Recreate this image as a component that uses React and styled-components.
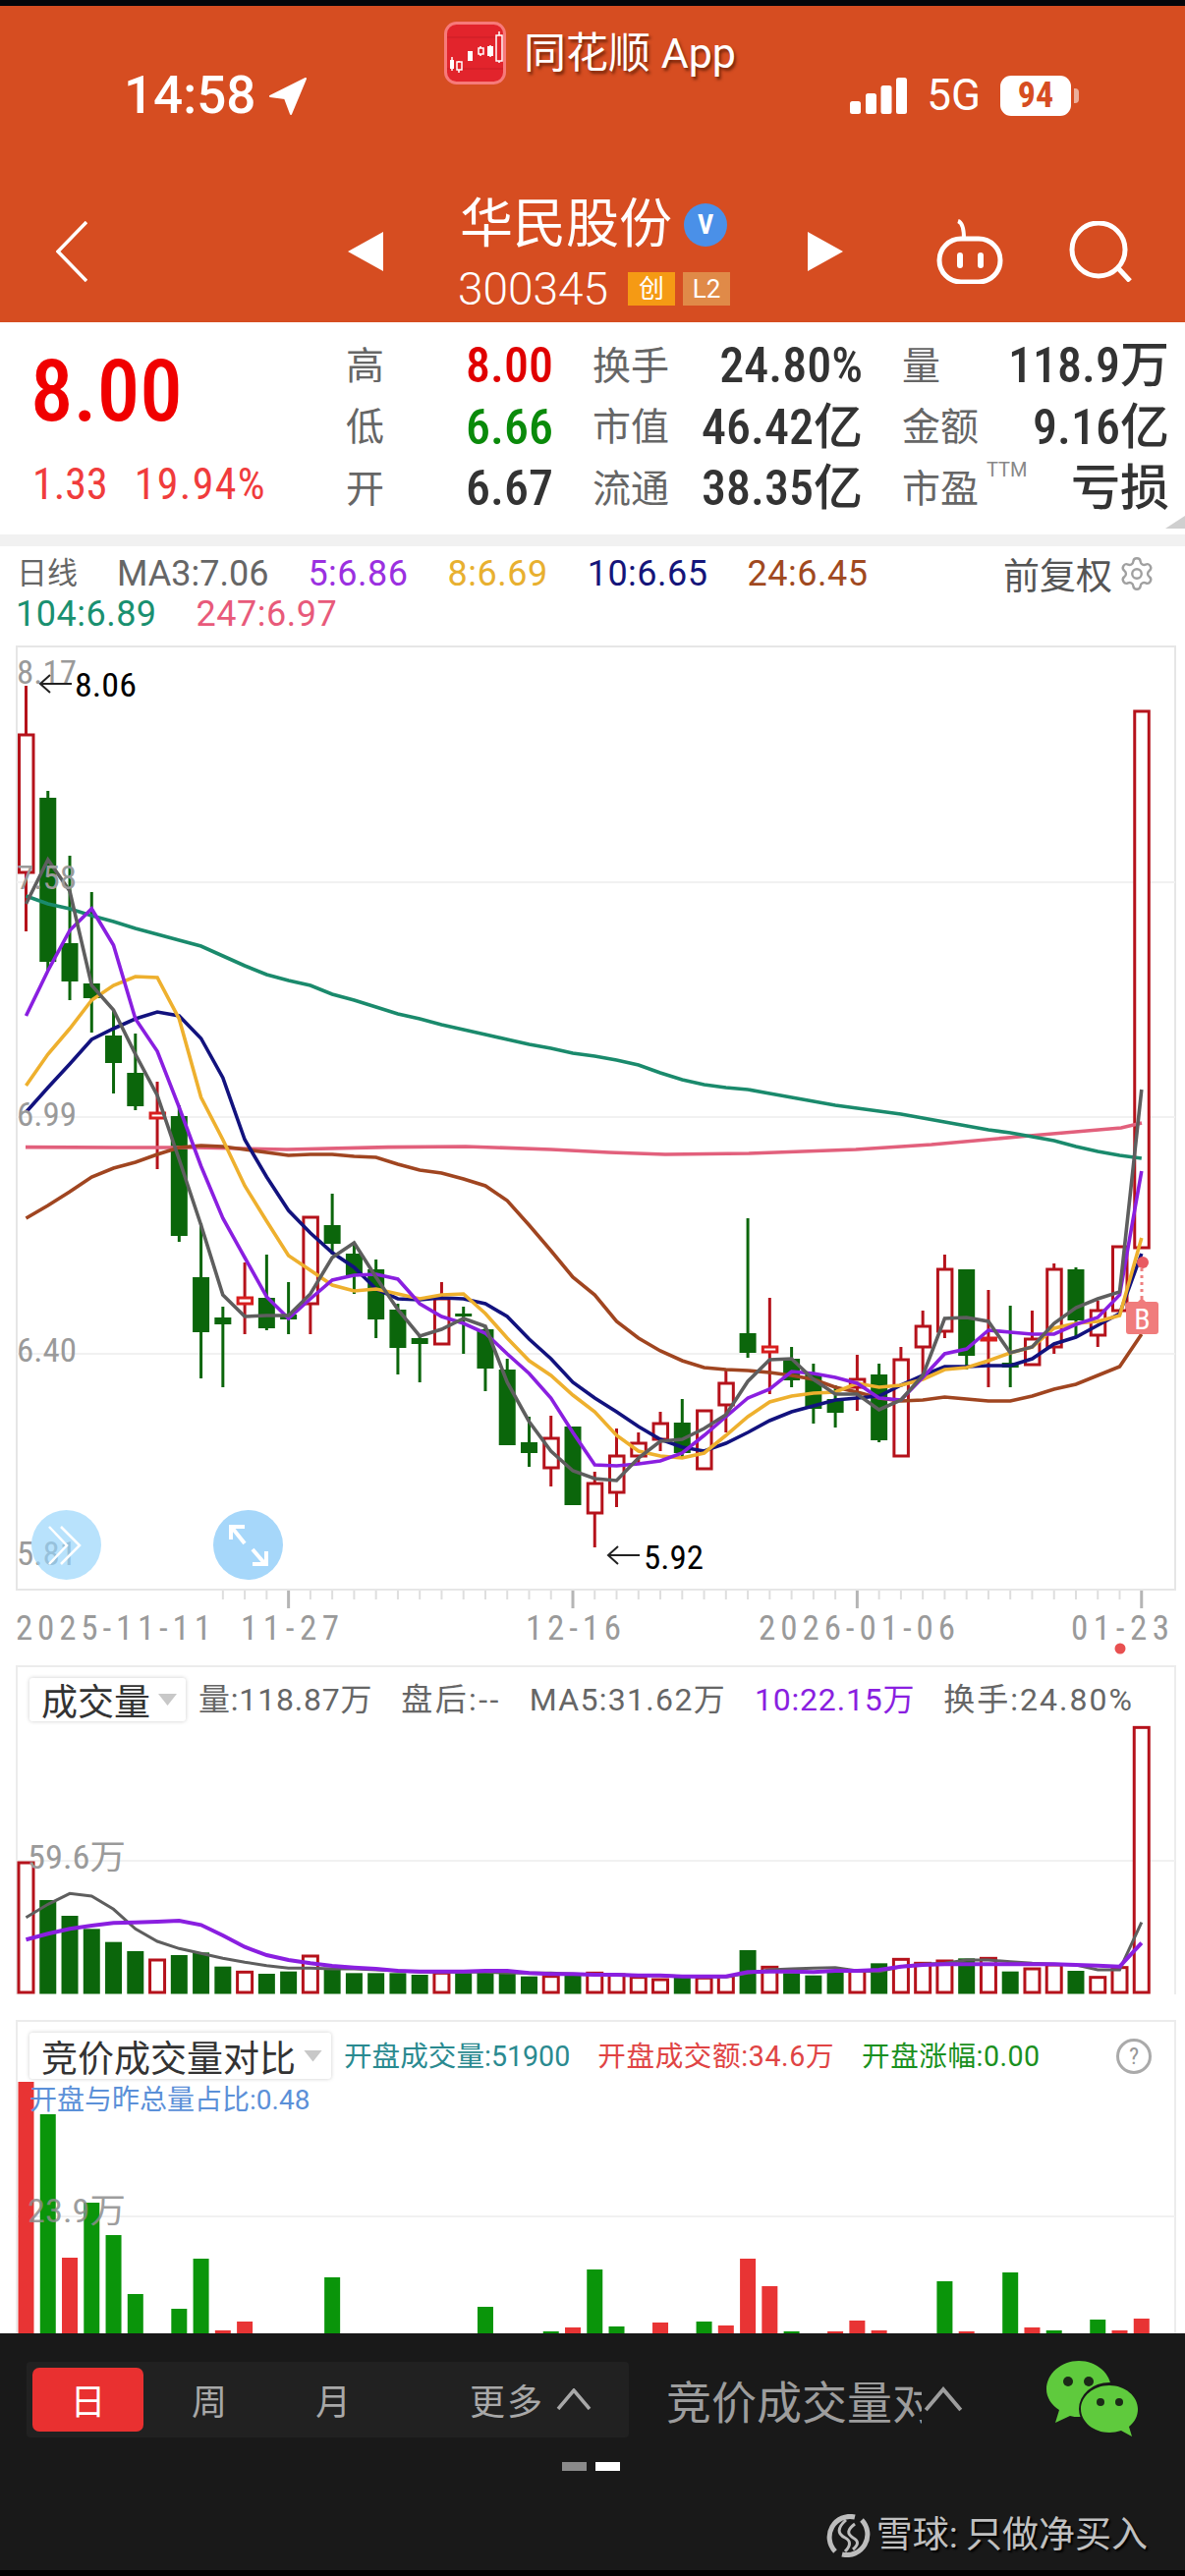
import React from "react";
import styled, { createGlobalStyle } from "styled-components";
import { Settings } from "lucide-react";

const ORANGE = "#d64d21";
const UP = "#b5121b";
const DOWN = "#0b660b";

const Global = createGlobalStyle`
  html, body { margin: 0; padding: 0; background: #fff; }
  body { font-family: Roboto, "Noto Sans CJK SC", sans-serif; font-stretch: 85%; }
  * { box-sizing: border-box; }
`;

const Page = styled.div`
  width: 1206px;
  height: 2622px;
  overflow: hidden;
  display: flex;
  flex-direction: column;
  background: #fff;
  border-top: 6px solid #05060a;
  border-bottom: 6px solid #000;
`;

/* ---------- header ---------- */
const Header = styled.header`
  position: relative;
  height: 322px;
  flex: none;
  background: ${ORANGE};
  color: #fff;
  padding-top: 71px;
`;
const AppBanner = styled.div`
  position: absolute;
  top: 16px;
  left: 452px;
  display: flex;
  align-items: center;
  gap: 18px;
  font-size: 43px;
  font-stretch: 100%;
  line-height: 64px;
  text-shadow: 2px 3px 3px rgba(70, 20, 0, 0.65);
`;
const StatusBar = styled.div`
  display: flex;
  align-items: center;
  height: 41px;
  padding: 0 116px 0 126px;
`;
const Clock = styled.span`
  font-size: 53px;
  font-stretch: 100%;
  font-weight: 500;
  line-height: 41px;
  width: 147px;
`;
const StatusRight = styled.div`
  margin-left: auto;
  display: flex;
  align-items: center;
  gap: 20px;
`;
const Net = styled.span`
  font-size: 44px;
  font-stretch: 100%;
  line-height: 41px;
`;
const Battery = styled.span`
  position: relative;
  display: block;
  width: 72px;
  height: 41px;
  border-radius: 11px;
  background: #fff;
  color: ${ORANGE};
  font-size: 36px;
  font-weight: 700;
  line-height: 41px;
  text-align: center;
  &::after {
    content: "";
    position: absolute;
    right: -8px;
    top: 13px;
    width: 5px;
    height: 15px;
    border-radius: 0 4px 4px 0;
    background: rgba(255, 255, 255, 0.55);
  }
`;
const NavBar = styled.nav`
  display: flex;
  align-items: center;
  height: 112px;
  margin-top: 82px;
  padding-left: 57px;
`;
const Triangle = styled.span`
  display: block;
  flex: none;
  width: 36px;
  height: 40px;
  margin-left: ${(p) => p.$ml}px;
  background: #fff;
  clip-path: ${(p) =>
    p.$dir === "left"
      ? "polygon(100% 0, 0 50%, 100% 100%)"
      : "polygon(0 0, 100% 50%, 0 100%)"};
`;
const TitleBox = styled.div`
  width: 356px;
  margin-left: 76px;
  display: flex;
  flex-direction: column;
`;
const NameRow = styled.div`
  display: flex;
  align-items: center;
  gap: 12px;
  height: 58px;
  margin-left: 2px;
  font-size: 54px;
  line-height: 58px;
`;
const VBadge = styled.span`
  display: flex;
  align-items: center;
  justify-content: center;
  width: 44px;
  height: 44px;
  border-radius: 50%;
  background: #4a90e8;
  font-size: 28px;
  font-weight: 700;
`;
const CodeRow = styled.div`
  display: flex;
  align-items: center;
  height: 38px;
  margin-top: 17px;
  font-size: 46px;
  font-stretch: 100%;
  line-height: 38px;
  font-weight: 300;
`;
const Tag = styled.span`
  display: flex;
  align-items: center;
  justify-content: center;
  width: 48px;
  height: 34px;
  margin-left: ${(p) => p.$ml}px;
  background: ${(p) => p.$bg};
  font-size: 26px;
  font-weight: 400;
`;
const NavIcon = styled.svg`
  display: block;
  flex: none;
  margin-left: ${(p) => p.$ml || 0}px;
`;

/* ---------- quote panel ---------- */
const Quote = styled.section`
  position: relative;
  flex: none;
  height: 216px;
  display: flex;
  padding-right: 13px;
`;
const PriceCol = styled.div`
  width: 352px;
  flex: none;
  padding: 28px 0 0 31px;
`;
const Price = styled.div`
  font-size: 87px;
  font-stretch: 78%;
  line-height: 85px;
  font-weight: 500;
  color: #f00000;
`;
const Change = styled.div`
  display: flex;
  gap: 27px;
  margin-top: 30px;
  margin-left: 2px;
  font-size: 44px;
  line-height: 44px;
  color: #f03c3c;
  span + span {
    letter-spacing: 1.3px;
  }
`;
const QuoteGrid = styled.div`
  flex: 1;
  display: grid;
  grid-template-columns: 211px 275px 272px;
  column-gap: 40px;
  grid-auto-rows: 62.5px;
  padding-top: 13px;
`;
const Cell = styled.div`
  display: flex;
  align-items: center;
`;
const Label = styled.span`
  font-size: 39px;
  color: #666;
  line-height: 1;
  margin-top: 2px;
`;
const Ttm = styled.span`
  align-self: flex-start;
  margin: 2px 0 0 8px;
  font-size: 20px;
  font-stretch: 100%;
  line-height: 20px;
  color: #888;
`;
const Value = styled.span`
  margin-left: auto;
  font-size: 50px;
  font-weight: 500;
  line-height: 1;
  color: ${(p) => p.$color || "#333"};
`;
const Corner = styled.span`
  position: absolute;
  right: 0;
  bottom: 6px;
  width: 20px;
  height: 13px;
  background: #cfcfcf;
  clip-path: polygon(100% 0, 100% 100%, 0 100%);
`;
const Band = styled.div`
  flex: none;
  height: 12px;
  background: #f1f1f1;
`;

/* ---------- MA legend ---------- */
const Legend = styled.section`
  flex: none;
  height: 100px;
  padding: 9px 0 0 17px;
`;
const LegendRow = styled.div`
  display: flex;
  align-items: center;
  gap: 40px;
  height: 38px;
  margin-left: ${(p) => p.$ml || 0}px;
  margin-top: ${(p) => p.$mt || 0}px;
`;
const Ma = styled.span`
  font-size: ${(p) => p.$size || 36}px;
  font-stretch: 100%;
  letter-spacing: ${(p) => p.$ls ?? 0.5}px;
  line-height: 38px;
  color: ${(p) => p.$color};
`;
const AdjustBox = styled.span`
  margin-left: auto;
  display: flex;
  align-items: center;
  gap: 6px;
  padding-right: 30px;
  font-size: 37px;
  color: #555;
`;

/* ---------- chart panels ---------- */
const KlineWrap = styled.section`
  position: relative;
  flex: none;
  height: 1039px;
`;
const ChartSvg = styled.svg`
  position: absolute;
  left: 0;
  top: 0;
  display: block;
`;
const AxisText = styled.text`
  font-family: Roboto, "Noto Sans CJK SC", sans-serif;
  font-stretch: 85%;
  font-size: ${(p) => p.$size || 35}px;
  font-weight: ${(p) => p.$weight || 400};
  fill: ${(p) => p.$fill || "#9a9a9a"};
`;
const FloatBtn = styled.button`
  position: absolute;
  left: ${(p) => p.$left}px;
  top: 881px;
  width: 71px;
  height: 71px;
  border: 0;
  padding: 0;
  border-radius: 50%;
  background: ${(p) => p.$bg};
  display: flex;
  align-items: center;
  justify-content: center;
`;
const SubPanel = styled.section`
  position: relative;
  flex: none;
  height: ${(p) => p.$h}px;
  overflow: hidden;
`;
const SubHead = styled.div`
  position: relative;
  display: flex;
  align-items: center;
  padding: ${(p) => p.$pt}px 0 0 30px;
`;
const Selector = styled.div`
  display: flex;
  align-items: center;
  flex: none;
  height: ${(p) => p.$h}px;
  padding: 0 9px 0 12px;
  background: #fff;
  box-shadow: 0 0 4px rgba(0, 0, 0, 0.2);
  border-radius: 3px;
  font-size: 37px;
  color: #333;
  gap: 8px;
  &::after {
    content: "";
    width: 19px;
    height: 12px;
    background: #c8c8c8;
    clip-path: polygon(0 0, 100% 0, 50% 100%);
  }
`;
const Stats = styled.div`
  display: flex;
  align-items: center;
  gap: ${(p) => p.$gap}px;
  margin-left: ${(p) => p.$ml}px;
`;
const Stat = styled.span`
  font-size: ${(p) => p.$size}px;
  font-stretch: 100%;
  letter-spacing: ${(p) => p.$ls || 0}px;
  line-height: 40px;
  color: ${(p) => p.$color || "#666"};
  white-space: nowrap;
`;
const Help = styled.span`
  position: absolute;
  left: 1136px;
  top: 19px;
  width: 36px;
  height: 36px;
  border: 3px solid #aaa;
  border-radius: 50%;
  font-size: 24px;
  line-height: 30px;
  text-align: center;
  color: #999;
`;
const RatioLine = styled.div`
  position: relative;
  margin: 5px 0 0 30px;
  font-size: 28px;
  font-stretch: 100%;
  line-height: 34px;
  color: #5b90d8;
`;

/* ---------- bottom bar ---------- */
const BottomBar = styled.footer`
  flex: 1;
  display: flex;
  flex-direction: column;
  background: #191919;
  color: #a8a8a8;
  position: relative;
  padding-top: 28px;
`;
const ToolRow = styled.div`
  display: flex;
  align-items: center;
  padding: 0 48px 0 27px;
`;
const Periods = styled.div`
  display: flex;
  align-items: center;
  width: 613px;
  height: 77px;
  padding-left: 6px;
  background: #212121;
  border-radius: 4px;
`;
const Period = styled.span`
  display: flex;
  align-items: center;
  justify-content: center;
  height: 65px;
  width: ${(p) => (p.$active ? 113 : 126)}px;
  margin-right: ${(p) => (p.$active ? 4 : 0)}px;
  background: ${(p) => (p.$active ? "#e93030" : "transparent")};
  color: ${(p) => (p.$active ? "#fff" : "#a8a8a8")};
  border-radius: 7px;
  font-size: 36px;
`;
const More = styled.span`
  margin-left: auto;
  padding-right: 38px;
  display: flex;
  align-items: center;
  gap: 12px;
  font-size: 36px;
  letter-spacing: 2px;
`;
const IndicatorPick = styled.div`
  display: flex;
  align-items: center;
  margin-left: 38px;
  font-size: 46px;
  color: #9d9d9d;
`;
const IndicatorName = styled.span`
  width: 260px;
  white-space: nowrap;
`;
const ChevronCover = styled.span`
  position: relative;
  display: flex;
  align-items: center;
  background: #191919;
  padding: 0 2px;
  height: 50px;
`;
const Spacer = styled.span`
  flex: 1;
`;
const PageDots = styled.div`
  display: flex;
  justify-content: center;
  gap: 9px;
  margin-top: 25px;
  padding-right: 3px;
`;
const PageDot = styled.span`
  width: 25px;
  height: 9px;
  background: ${(p) => (p.$on ? "#fff" : "#8a8a8a")};
`;
const Watermark = styled.div`
  display: flex;
  align-items: center;
  justify-content: flex-end;
  gap: 5px;
  margin-top: 44px;
  padding-right: 38px;
  font-size: 37px;
  line-height: 44px;
  color: #c0c0c0;
  text-shadow: 2px 2px 2px #000;
`;

/* ---------- data (page pixel coordinates) ---------- */
const X = (i) => 26.5 + 22.26 * i;
const upSet = new Set([0, 6, 10, 13, 19, 24, 26, 27, 28, 29, 31, 32, 34, 38, 40, 41, 42, 44, 46, 47, 49, 50, 51]);

const candles = [
  [698, 748, 888, 948], [805, 812, 979, 988], [871, 960, 999, 1018], [908, 1001, 1016, 1051],
  [1028, 1054, 1082, 1113], [1052, 1092, 1126, 1130], [1101, 1133, 1138, 1190], [1125, 1136, 1258, 1264],
  [1245, 1300, 1356, 1403], [1330, 1341, 1348, 1412], [1285, 1321, 1327, 1358], [1277, 1321, 1352, 1354],
  [1305, 1338, 1343, 1358], [1239, 1239, 1327, 1358], [1215, 1247, 1266, 1277], [1265, 1276, 1298, 1317],
  [1282, 1292, 1343, 1362], [1327, 1333, 1372, 1399], [1360, 1362, 1368, 1407], [1305, 1322, 1368, 1368],
  [1330, 1337, 1340, 1378], [1350, 1353, 1393, 1416], [1383, 1394, 1471, 1471], [1442, 1468, 1479, 1493],
  [1441, 1464, 1494, 1513], [1452, 1452, 1532, 1532], [1498, 1510, 1540, 1575], [1454, 1482, 1519, 1534],
  [1458, 1469, 1482, 1490], [1437, 1449, 1465, 1477], [1424, 1448, 1479, 1484], [1436, 1436, 1495, 1495],
  [1394, 1408, 1430, 1458], [1240, 1357, 1377, 1382], [1321, 1371, 1376, 1419], [1371, 1383, 1405, 1412],
  [1388, 1398, 1434, 1449], [1410, 1424, 1438, 1453], [1379, 1404, 1412, 1436], [1388, 1399, 1466, 1468],
  [1371, 1384, 1482, 1482], [1334, 1350, 1371, 1402], [1277, 1292, 1355, 1362], [1292, 1292, 1380, 1394],
  [1313, 1362, 1364, 1412], [1329, 1387, 1392, 1412], [1334, 1363, 1389, 1389], [1286, 1292, 1371, 1378],
  [1290, 1292, 1344, 1360], [1324, 1334, 1359, 1371], [1269, 1269, 1334, 1334], [724, 724, 1270, 1270],
];

const ma3 = [920,875,907,1003,1028,1073,1115,1180,1247,1318,1340,1339,1339,1317,1280,1265,1300,1333,1360,1353,1342,1350,1407,1447,1477,1497,1505,1507,1484,1467,1465,1454,1440,1406,1384,1383,1404,1419,1419,1435,1425,1400,1342,1341,1345,1377,1371,1347,1331,1322,1315,1109];
const ma5 = [1034,988,947,925,962,1037,1070,1127,1187,1240,1280,1320,1342,1322,1303,1298,1297,1302,1327,1340,1347,1357,1378,1398,1423,1458,1491,1492,1490,1487,1479,1461,1442,1423,1414,1396,1398,1402,1408,1423,1425,1402,1378,1373,1354,1356,1358,1358,1348,1341,1318,1192];
const ma8 = [1105,1073,1047,1018,1003,994,995,1037,1117,1160,1207,1243,1278,1293,1308,1314,1312,1317,1322,1318,1317,1337,1362,1385,1400,1420,1437,1461,1477,1482,1484,1479,1461,1442,1427,1421,1418,1417,1408,1412,1410,1404,1394,1392,1385,1377,1371,1352,1347,1345,1339,1260];
const ma10 = [1132,1107,1083,1058,1047,1037,1030,1034,1057,1097,1160,1198,1232,1255,1275,1290,1312,1322,1323,1321,1322,1327,1340,1363,1383,1407,1423,1437,1452,1465,1473,1477,1469,1458,1446,1437,1431,1425,1423,1421,1410,1400,1391,1391,1390,1390,1383,1368,1361,1349,1337,1276];
const ma24 = [1240,1227,1213,1198,1189,1183,1175,1168,1166,1167,1170,1173,1176,1175,1175,1177,1178,1185,1191,1194,1200,1207,1222,1247,1273,1300,1318,1345,1362,1375,1385,1392,1394,1395,1397,1400,1404,1412,1417,1423,1426,1425,1422,1424,1426,1426,1421,1414,1409,1400,1391,1358];
const ma104 = [912,920,925,932,938,945,951,957,963,973,983,992,998,1003,1012,1018,1025,1032,1037,1043,1048,1053,1058,1063,1067,1072,1075,1079,1084,1092,1099,1104,1107,1109,1113,1117,1121,1125,1128,1131,1134,1138,1142,1146,1150,1153,1157,1161,1167,1172,1176,1179];
const ma247 = "26,1167.6 119,1168 198,1168 292,1170 395,1167.6 474,1167 561,1170 620,1173 677,1175 762,1174 871,1170 948,1165 1048,1156 1141,1148 1162,1143";

const volV = [648,762,810,850,890,918,945,930,922,965,982,987,980,933,975,985,985,985,990,985,985,982,982,995,995,990,985,990,998,1005,995,1000,995,915,967,985,992,980,978,955,943,955,948,940,940,980,972,960,978,998,968,235];
const volMa5 = [815,775,742,750,790,850,888,910,925,940,952,962,970,970,972,972,975,978,982,982,982,982,985,985,985,988,990,990,992,992,995,995,997,985,975,972,970,968,978,980,965,958,955,945,945,950,955,958,960,975,975,830];
const volMa10 = [883,865,850,840,832,830,828,825,838,870,905,930,945,955,963,968,972,978,980,980,980,978,978,985,988,988,990,990,992,992,995,995,995,982,980,980,982,978,978,975,965,960,958,958,958,958,958,958,960,962,965,893];

const auction = [
  [0,2119,1],[1,2152,0],[2,2298,1],[3,2242,0],[4,2275,0],[5,2335,0],[7,2350,0],[8,2299,0],[9,2372,1],[10,2363,1],
  [14,2318,0],[21,2348,0],[24,2373,0],[25,2369,1],[26,2310,0],[27,2368,0],[29,2364,1],[31,2363,0],[32,2367,1],
  [33,2299,1],[34,2327,1],[35,2373,0],[37,2373,1],[38,2362,1],[39,2372,1],[42,2322,0],[43,2373,1],[45,2313,0],
  [46,2369,1],[47,2372,0],[49,2361,0],[50,2372,1],[51,2360,1],
];

const line = (arr, f = (v) => v) => arr.map((v, i) => `${X(i).toFixed(1)},${f(v).toFixed(1)}`).join(" ");
const volY = (v) => 1680 + v / 3;

function Candle({ i, d }) {
  const [wt, bt, bb, wb] = d;
  const x = X(i);
  const up = upSet.has(i);
  const c = up ? UP : DOWN;
  return (
    <g>
      {wt < bt && <line x1={x} x2={x} y1={wt} y2={bt} stroke={c} strokeWidth="3" />}
      {wb > bb && <line x1={x} x2={x} y1={bb} y2={wb} stroke={c} strokeWidth="3" />}
      {up ? (
        <rect x={x - 7} y={bt} width="14.5" height={Math.max(bb - bt, 2)} fill="#fff" stroke={bb - bt < 8 ? "#d81e1e" : c} strokeWidth="3" />
      ) : (
        <rect x={x - 8.5} y={bt} width="17" height={bb - bt} fill={c} />
      )}
    </g>
  );
}

function LeftArrow({ x, y }) {
  return <path d={`M${x + 33} ${y}H${x + 1}M${x + 11} ${y - 9}L${x + 1} ${y}L${x + 11} ${y + 9}`} fill="none" stroke="#222" strokeWidth="2" />;
}

function KlineChart() {
  const gridYs = [898, 1137, 1378];
  const labels = [["8.17", 696], ["7.58", 905], ["6.99", 1146], ["6.40", 1386], ["5.81", 1593]];
  const w = 3.6;
  return (
    <ChartSvg width="1206" height="1039" viewBox="0 656 1206 1039">
      <rect x="17" y="658" width="1179" height="960" fill="none" stroke="#e6e6e6" strokeWidth="2" />
      {gridYs.map((y) => (
        <line key={y} x1="17" x2="1196" y1={y} y2={y} stroke="#f1f1f1" strokeWidth="2" />
      ))}
      {candles.map((d, i) => (
        <Candle key={i} i={i} d={d} />
      ))}
      <polyline points={ma247} fill="none" stroke="#e2607c" strokeWidth={w} />
      <polyline points={line(ma104)} fill="none" stroke="#1a8a6c" strokeWidth={w} />
      <polyline points={line(ma24)} fill="none" stroke="#a04520" strokeWidth={w} />
      <polyline points={line(ma10)} fill="none" stroke="#12127e" strokeWidth={w} />
      <polyline points={line(ma8)} fill="none" stroke="#eeb02e" strokeWidth={w} />
      <polyline points={line(ma5)} fill="none" stroke="#8a1fe0" strokeWidth={w} />
      <polyline points={line(ma3)} fill="none" stroke="#5e5e5e" strokeWidth={w} />
      {labels.map(([t, y]) => (
        <AxisText key={t} x="17" y={y} textLength="61" lengthAdjust="spacingAndGlyphs" $size={34}>
          {t}
        </AxisText>
      ))}
      <LeftArrow x={40} y={696} />
      <AxisText x="76" y="709" textLength="63" lengthAdjust="spacingAndGlyphs" $size={34} $fill="#000">8.06</AxisText>
      <LeftArrow x={618} y={1583} />
      <AxisText x="655" y="1597" textLength="61" lengthAdjust="spacingAndGlyphs" $size={34} $fill="#000">5.92</AxisText>
      <line x1="1162" x2="1162" y1="1291" y2="1322" stroke="#ee8080" strokeWidth="3" strokeDasharray="3 4" />
      <circle cx="1163" cy="1285" r="6" fill="#e85a62" />
      <path d="M1146 1328a3 3 0 0 1 3-3h9l4-4 4 4h10a3 3 0 0 1 3 3v27a3 3 0 0 1-3 3h-27a3 3 0 0 1-3-3z" fill="#f07c7c" />
      <AxisText x="1162.5" y="1353" textAnchor="middle" $size={30} $fill="#fff">B</AxisText>
      {Array.from({ length: 43 }, (_, k) => k + 9).map((i) => {
        const big = [12, 25, 38, 51].includes(i);
        return (
          <line key={i} x1={X(i)} x2={X(i)} y1="1619" y2={big ? 1637 : 1628} stroke={big ? "#b5b5b5" : "#dedede"} strokeWidth={big ? 3 : 2} />
        );
      })}
      <AxisText x="16" y="1669" textLength="199" lengthAdjust="spacing">2025-11-11</AxisText>
      <AxisText x="245" y="1669" textLength="100" lengthAdjust="spacing">11-27</AxisText>
      <AxisText x="535" y="1669" textLength="97" lengthAdjust="spacing">12-16</AxisText>
      <AxisText x="772" y="1669" textLength="200" lengthAdjust="spacing">2026-01-06</AxisText>
      <AxisText x="1090" y="1669" textLength="100" lengthAdjust="spacing">01-23</AxisText>
      <circle cx="1140" cy="1678" r="5.5" fill="#e85050" />
    </ChartSvg>
  );
}

function VolumeChart() {
  return (
    <ChartSvg width="1206" height="361" viewBox="0 1695 1206 361">
      <path d="M17 2030V1696H1196V2030" fill="none" stroke="#ececec" strokeWidth="2" />
      <line x1="17" x2="1196" y1="1894" y2="1894" stroke="#f1f1f1" strokeWidth="2" />
      {volV.map((v, i) => {
        const y = volY(v);
        return upSet.has(i) ? (
          <rect key={i} x={X(i) - 7.5} y={y} width="15" height={2028 - y} fill="#fff" stroke={UP} strokeWidth="3" />
        ) : (
          <rect key={i} x={X(i) - 8.5} y={y} width="17" height={2029.5 - y} fill={DOWN} />
        );
      })}
      <polyline points={line(volMa5, volY)} fill="none" stroke="#5e5e5e" strokeWidth="3" />
      <polyline points={line(volMa10, volY)} fill="none" stroke="#8a1fe0" strokeWidth="4" />
      <AxisText x="28" y="1902" textLength="100" lengthAdjust="spacingAndGlyphs" $size={34}>59.6万</AxisText>
    </ChartSvg>
  );
}

function AuctionChart() {
  return (
    <ChartSvg width="1206" height="319" viewBox="0 2056 1206 319">
      <path d="M17 2376V2057H1196V2376" fill="none" stroke="#ececec" strokeWidth="2" />
      <line x1="17" x2="1196" y1="2256" y2="2256" stroke="#f1f1f1" strokeWidth="2" />
      {auction.map(([i, y, up]) => (
        <rect key={i} x={X(i) - 8} y={y} width="16" height={2376 - y} fill={up ? "#e83434" : "#0a950a"} />
      ))}
      <AxisText x="28" y="2262" textLength="100" lengthAdjust="spacingAndGlyphs" $size={34} $fill="rgba(140,140,140,.85)">23.9万</AxisText>
    </ChartSvg>
  );
}

const AppIcon = () => (
  <svg width="63" height="64" viewBox="0 0 63 64">
    <rect x="1.5" y="1.5" width="60" height="61" rx="11" fill="#e2242c" stroke="#f77a7a" strokeWidth="3" />
    <path d="M3 16h57M3 48h57" stroke="#c81c24" strokeWidth="1" />
    <path d="M8 36v14M15 40v12M26 30v10M37 25v10M47 24v12M56 10v32" stroke="#fff" strokeWidth="1.5" />
    <g fill="#fff">
      <rect x="6" y="39" width="4" height="9" />
      <rect x="24" y="30" width="5" height="10" />
      <rect x="44" y="25" width="6" height="10" />
    </g>
    <g fill="#e2242c" stroke="#fff" strokeWidth="1.5">
      <rect x="13" y="41" width="5" height="8" />
      <rect x="35" y="27" width="5" height="6" />
      <rect x="53" y="14" width="6" height="26" />
    </g>
  </svg>
);

const Signal = () => (
  <svg width="58" height="37" viewBox="0 0 58 37" fill="#fff">
    <rect x="0" y="24" width="11" height="13" rx="2.5" />
    <rect x="16" y="16" width="11" height="21" rx="2.5" />
    <rect x="31.5" y="8" width="11" height="29" rx="2.5" />
    <rect x="47" y="0" width="11" height="37" rx="2.5" />
  </svg>
);

const WeChat = () => (
  <svg width="93" height="78" viewBox="1065 2403 93 78">
    <path d="M1098 2403c18 0 33 13 33 29 0 16-15 28-33 28-3 0-6 0-9-1l-15 7 4-13c-8-5-13-13-13-21 0-16 15-29 33-29z" fill="#5fca3d" />
    <ellipse cx="1129" cy="2452" rx="31" ry="27" fill="#191919" />
    <path d="M1129 2428c16 0 29 11 29 24 0 7-3 13-9 18l3 10-11-6c-4 1-8 2-12 2-16 0-29-11-29-24s13-24 29-24z" fill="#5fca3d" />
    <circle cx="1087" cy="2424" r="5" fill="#1c2a18" />
    <circle cx="1108" cy="2424" r="5" fill="#1c2a18" />
    <circle cx="1120" cy="2445" r="4" fill="#1c2a18" />
    <circle cx="1139" cy="2445" r="4" fill="#1c2a18" />
  </svg>
);

const SnowLogo = () => (
  <svg width="47" height="44" viewBox="0 0 47 44" fill="none" stroke="#bdbdbd" strokeWidth="5">
    <path d="M30 3A21 21 0 0 0 10 38" />
    <path d="M17 41A21 21 0 0 0 37 6" />
    <path d="M21 6C12 14 12 20 20 24C26 27 26 32 20 38" strokeWidth="3" />
    <path d="M30 10C22 16 22 20 28 24C34 27 34 31 28 36" strokeWidth="3" />
  </svg>
);

const Chevron = ({ w = 36, h = 22 }) => (
  <svg width={w} height={h} viewBox="0 0 36 22" fill="none" stroke="currentColor" strokeWidth="3.5">
    <path d="M2 21L18 2L34 21" />
  </svg>
);

export default function App() {
  return (
    <Page>
      <Global />
      <Header>
        <AppBanner>
          <AppIcon />
          <span>同花顺 App</span>
        </AppBanner>
        <StatusBar>
          <Clock>14:58</Clock>
          <svg width="40" height="40" viewBox="0 0 40 40" fill="#fff" stroke="#fff" strokeWidth="2" strokeLinejoin="round">
            <path d="M38 2L2 20l15 2 6 16z" />
          </svg>
          <StatusRight>
            <Signal />
            <Net>5G</Net>
            <Battery>94</Battery>
          </StatusRight>
        </StatusBar>
        <NavBar>
          <NavIcon width="32" height="62" viewBox="0 0 32 62" fill="none" stroke="#fff" strokeWidth="3.5">
            <path d="M31 1L2 31L31 61" />
          </NavIcon>
          <Triangle $dir="left" $ml={265} />
          <TitleBox>
            <NameRow>
              <span>华民股份</span>
              <VBadge>V</VBadge>
            </NameRow>
            <CodeRow>
              <span>300345</span>
              <Tag $ml={20} $bg="#f59a14">创</Tag>
              <Tag $ml={8} $bg="#e08a48">L2</Tag>
            </CodeRow>
          </TitleBox>
          <Triangle $dir="right" />
          <NavIcon $ml={95} width="68" height="66" viewBox="0 0 68 66" fill="none" stroke="#fff" strokeWidth="5">
            <path d="M22 2c3 1 6 5 6 18" strokeWidth="4" />
            <rect x="3" y="20" width="62" height="44" rx="22" />
            <rect x="21" y="34" width="6" height="16" rx="3" fill="#fff" stroke="none" />
            <rect x="42" y="34" width="6" height="16" rx="3" fill="#fff" stroke="none" />
          </NavIcon>
          <NavIcon $ml={67} width="64" height="62" viewBox="0 0 64 62" fill="none" stroke="#fff" strokeWidth="5">
            <ellipse cx="30" cy="29" rx="27" ry="27" />
            <path d="M50 48L62 61" />
          </NavIcon>
        </NavBar>
      </Header>

      <Quote>
        <PriceCol>
          <Price>8.00</Price>
          <Change>
            <span>1.33</span>
            <span>19.94%</span>
          </Change>
        </PriceCol>
        <QuoteGrid>
          <Cell><Label>高</Label><Value $color="#e00000">8.00</Value></Cell>
          <Cell><Label>换手</Label><Value>24.80%</Value></Cell>
          <Cell><Label>量</Label><Value>118.9万</Value></Cell>
          <Cell><Label>低</Label><Value $color="#0a8a0a">6.66</Value></Cell>
          <Cell><Label>市值</Label><Value>46.42亿</Value></Cell>
          <Cell><Label>金额</Label><Value>9.16亿</Value></Cell>
          <Cell><Label>开</Label><Value>6.67</Value></Cell>
          <Cell><Label>流通</Label><Value>38.35亿</Value></Cell>
          <Cell><Label>市盈</Label><Ttm>TTM</Ttm><Value>亏损</Value></Cell>
        </QuoteGrid>
        <Corner />
      </Quote>
      <Band />

      <Legend>
        <LegendRow>
          <Ma $color="#666" $size={31} $ls={0}>日线</Ma>
          <Ma $color="#666" $ls={0}>MA3:7.06</Ma>
          <Ma $color="#9b30e0">5:6.86</Ma>
          <Ma $color="#e8b030">8:6.69</Ma>
          <Ma $color="#15157a">10:6.65</Ma>
          <Ma $color="#a0491f">24:6.45</Ma>
          <AdjustBox>
            前复权
            <Settings size={38} color="#a0a0a0" strokeWidth={1.5} />
          </AdjustBox>
        </LegendRow>
        <LegendRow $ml={-1} $mt={3}>
          <Ma $color="#1a9070">104:6.89</Ma>
          <Ma $color="#e85a7a">247:6.97</Ma>
        </LegendRow>
      </Legend>

      <KlineWrap>
        <KlineChart />
        <FloatBtn $left={32} $bg="rgba(150,212,250,.68)">
          <svg width="46" height="46" viewBox="0 0 46 46" fill="none" stroke="#fff" strokeWidth="2.5">
            <path d="M5 4l18 19L5 42" />
            <path d="M17 4l19 19-19 19" />
          </svg>
        </FloatBtn>
        <FloatBtn $left={217} $bg="#a6d7fa">
          <svg width="42" height="44" viewBox="0 0 42 44" fill="none" stroke="#fff" strokeWidth="4">
            <path d="M5 5l12 15M25 26l12 14" />
            <path d="M3 16V3h14M39 28v13H25" />
          </svg>
        </FloatBtn>
      </KlineWrap>

      <SubPanel $h={361}>
        <VolumeChart />
        <SubHead $pt={13}>
          <Selector $h={44}>成交量</Selector>
          <Stats $gap={29} $ml={13}>
            <Stat $size={32} $ls={0.8}>量:118.87万</Stat>
            <Stat $size={32} $ls={2.4}>盘后:--</Stat>
            <Stat $size={32} $ls={1.3}>MA5:31.62万</Stat>
            <Stat $size={32} $ls={0.8} $color="#8a1fe0">10:22.15万</Stat>
            <Stat $size={32} $ls={2}>换手:24.80%</Stat>
          </Stats>
        </SubHead>
      </SubPanel>

      <SubPanel $h={319}>
        <AuctionChart />
        <SubHead $pt={13}>
          <Selector $h={47}>竞价成交量对比</Selector>
          <Stats $gap={28} $ml={13}>
            <Stat $size={28.6} $color="#2a8a90">开盘成交量:51900</Stat>
            <Stat $size={28.6} $ls={0.6} $color="#e04444">开盘成交额:34.6万</Stat>
            <Stat $size={28.6} $ls={0.5} $color="#1a9020">开盘涨幅:0.00</Stat>
          </Stats>
          <Help>?</Help>
        </SubHead>
        <RatioLine>开盘与昨总量占比:0.48</RatioLine>
      </SubPanel>

      <BottomBar>
        <ToolRow>
          <Periods>
            <Period $active>日</Period>
            <Period>周</Period>
            <Period>月</Period>
            <More>
              更多
              <Chevron />
            </More>
          </Periods>
          <IndicatorPick>
            <IndicatorName>竞价成交量对</IndicatorName>
            <ChevronCover>
              <Chevron w={40} h={26} />
            </ChevronCover>
          </IndicatorPick>
          <Spacer />
          <WeChat />
        </ToolRow>
        <PageDots>
          <PageDot />
          <PageDot $on />
        </PageDots>
        <Watermark>
          <SnowLogo />
          <span>雪球: 只做净买入</span>
        </Watermark>
      </BottomBar>
    </Page>
  );
}
